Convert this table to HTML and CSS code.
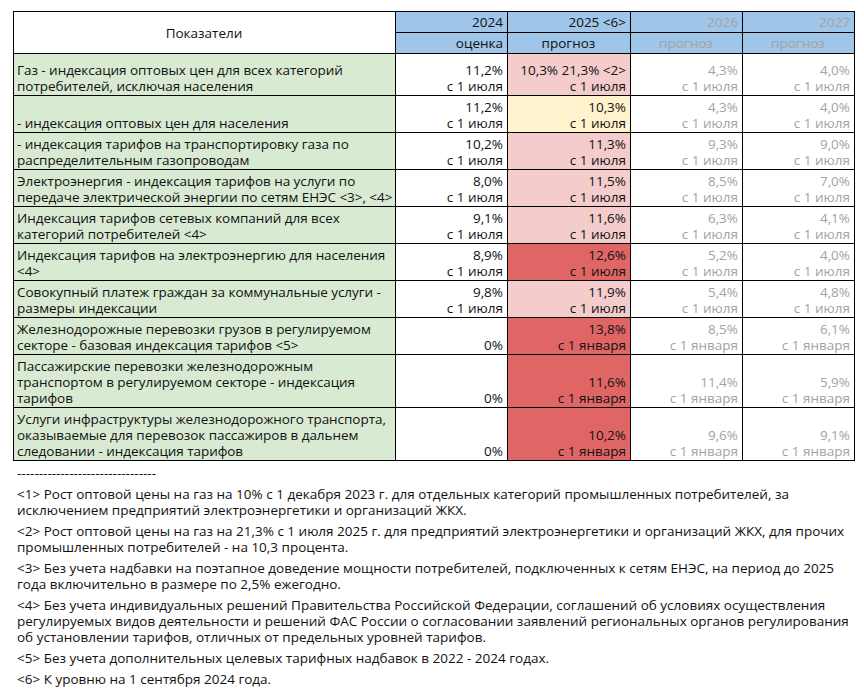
FILE: index.html
```html
<!DOCTYPE html>
<html lang="ru">
<head>
<meta charset="utf-8">
<title>Показатели</title>
<link rel="stylesheet" href="styles.css">
</head>
<body>
<div class="page">
<table class="grid">
  <colgroup>
    <col class="c-name"><col class="c-val"><col class="c-val25"><col class="c-val"><col class="c-val">
  </colgroup>
  <thead>
    <tr class="h1">
      <th rowspan="2" class="name-head">Показатели</th>
      <th class="blue right">2024</th>
      <th class="blue right">2025 &lt;6&gt;</th>
      <th class="blue right muted">2026</th>
      <th class="blue right muted">2027</th>
    </tr>
    <tr class="h2">
      <th class="blue right">оценка</th>
      <th class="blue center">прогноз</th>
      <th class="blue center muted">прогноз</th>
      <th class="blue center muted">прогноз</th>
    </tr>
  </thead>
  <tbody>
    <tr class="r42">
      <td class="name">Газ - индексация оптовых цен для всех категорий потребителей, исключая населения</td>
      <td class="v">11,2%<br>с 1 июля</td>
      <td class="v pink">10,3% 21,3% &lt;2&gt;<br>с 1 июля</td>
      <td class="v muted">4,3%<br>с 1 июля</td>
      <td class="v muted">4,0%<br>с 1 июля</td>
    </tr>
    <tr class="r37">
      <td class="name">- индексация оптовых цен для населения</td>
      <td class="v">11,2%<br>с 1 июля</td>
      <td class="v yellow">10,3%<br>с 1 июля</td>
      <td class="v muted">4,3%<br>с 1 июля</td>
      <td class="v muted">4,0%<br>с 1 июля</td>
    </tr>
    <tr class="r37">
      <td class="name">- индексация тарифов на транспортировку газа по распределительным газопроводам</td>
      <td class="v">10,2%<br>с 1 июля</td>
      <td class="v pink">11,3%<br>с 1 июля</td>
      <td class="v muted">9,3%<br>с 1 июля</td>
      <td class="v muted">9,0%<br>с 1 июля</td>
    </tr>
    <tr class="r37">
      <td class="name">Электроэнергия - индексация тарифов на услуги по передаче электрической энергии по сетям ЕНЭС &lt;3&gt;, &lt;4&gt;</td>
      <td class="v">8,0%<br>с 1 июля</td>
      <td class="v pink">11,5%<br>с 1 июля</td>
      <td class="v muted">8,5%<br>с 1 июля</td>
      <td class="v muted">7,0%<br>с 1 июля</td>
    </tr>
    <tr class="r37">
      <td class="name">Индексация тарифов сетевых компаний для всех категорий потребителей &lt;4&gt;</td>
      <td class="v">9,1%<br>с 1 июля</td>
      <td class="v pink">11,6%<br>с 1 июля</td>
      <td class="v muted">6,3%<br>с 1 июля</td>
      <td class="v muted">4,1%<br>с 1 июля</td>
    </tr>
    <tr class="r37">
      <td class="name">Индексация тарифов на электроэнергию для населения &lt;4&gt;</td>
      <td class="v">8,9%<br>с 1 июля</td>
      <td class="v red">12,6%<br>с 1 июля</td>
      <td class="v muted">5,2%<br>с 1 июля</td>
      <td class="v muted">4,0%<br>с 1 июля</td>
    </tr>
    <tr class="r37">
      <td class="name">Совокупный платеж граждан за коммунальные услуги - размеры индексации</td>
      <td class="v">9,8%<br>с 1 июля</td>
      <td class="v pink">11,9%<br>с 1 июля</td>
      <td class="v muted">5,4%<br>с 1 июля</td>
      <td class="v muted">4,8%<br>с 1 июля</td>
    </tr>
    <tr class="r37">
      <td class="name">Железнодорожные перевозки грузов в регулируемом секторе - базовая индексация тарифов &lt;5&gt;</td>
      <td class="v">0%</td>
      <td class="v red">13,8%<br>с 1 января</td>
      <td class="v muted">8,5%<br>с 1 января</td>
      <td class="v muted">6,1%<br>с 1 января</td>
    </tr>
    <tr class="r53">
      <td class="name">Пассажирские перевозки железнодорожным транспортом в регулируемом секторе - индексация тарифов</td>
      <td class="v">0%</td>
      <td class="v red">11,6%<br>с 1 января</td>
      <td class="v muted">11,4%<br>с 1 января</td>
      <td class="v muted">5,9%<br>с 1 января</td>
    </tr>
    <tr class="r53">
      <td class="name">Услуги инфраструктуры железнодорожного транспорта, оказываемые для перевозок пассажиров в дальнем следовании - индексация тарифов</td>
      <td class="v">0%</td>
      <td class="v red">10,2%<br>с 1 января</td>
      <td class="v muted">9,6%<br>с 1 января</td>
      <td class="v muted">9,1%<br>с 1 января</td>
    </tr>
  </tbody>
</table>
<div class="notes">
  <p class="rule">--------------------------------</p>
  <p>&lt;1&gt; Рост оптовой цены на газ на 10% с 1 декабря 2023 г. для отдельных категорий промышленных потребителей, за исключением предприятий электроэнергетики и организаций ЖКХ.</p>
  <p>&lt;2&gt; Рост оптовой цены на газ на 21,3% с 1 июля 2025 г. для предприятий электроэнергетики и организаций ЖКХ, для прочих промышленных потребителей - на 10,3 процента.</p>
  <p>&lt;3&gt; Без учета надбавки на поэтапное доведение мощности потребителей, подключенных к сетям ЕНЭС, на период до 2025 года включительно в размере по 2,5% ежегодно.</p>
  <p>&lt;4&gt; Без учета индивидуальных решений Правительства Российской Федерации, соглашений об условиях осуществления регулируемых видов деятельности и решений ФАС России о согласовании заявлений региональных органов регулирования об установлении тарифов, отличных от предельных уровней тарифов.</p>
  <p>&lt;5&gt; Без учета дополнительных целевых тарифных надбавок в 2022 - 2024 годах.</p>
  <p>&lt;6&gt; К уровню на 1 сентября 2024 года.</p>
</div>
</div>
</body>
</html>
```

FILE: styles.css
```css
html, body {
  margin: 0;
  padding: 0;
  background: #ffffff;
}

body {
  font-family: "Open Sans", "Noto Sans", sans-serif;
  font-size: 13.5px;
  line-height: 16px;
  color: #111111;
}

.page {
  padding: 11px 0 0 13px;
  width: 842px;
}

.grid {
  border-collapse: collapse;
  table-layout: fixed;
  width: 842px;
}

.c-name { width: 382px; }
.c-val { width: 112px; }
.c-val25 { width: 123px; }

.grid th,
.grid td {
  border: 1px solid #000000;
  padding: 0 4px 1px 3px;
  font-weight: normal;
  overflow: hidden;
}

.grid th {
  vertical-align: middle;
  padding-top: 1px;
}

.h1, .h2 { height: 21px; }
.r42 { height: 42px; }
.r37 { height: 37px; }
.r53 { height: 53px; }

.name-head {
  background: #ffffff;
  text-align: center;
}

.blue { background: #9fc5e8; }
.right { text-align: right; }
.center { text-align: center; }

.grid td {
  vertical-align: bottom;
}

.grid td.name {
  background: #d9ead3;
  text-align: left;
  padding-right: 0;
  letter-spacing: -0.05px;
}

.v {
  text-align: right;
  white-space: nowrap;
}

.muted { color: #a3a3a3; }

.pink { background: #f4cccc; }
.yellow { background: #fff2cc; }
.red { background: #e06666; }

.notes {
  padding-left: 4px;
  width: 838px;
  padding-top: 4px;
}

.notes p {
  margin: 0 0 5px 0;
}

.notes .rule {
  margin-bottom: 5px;
}
```
